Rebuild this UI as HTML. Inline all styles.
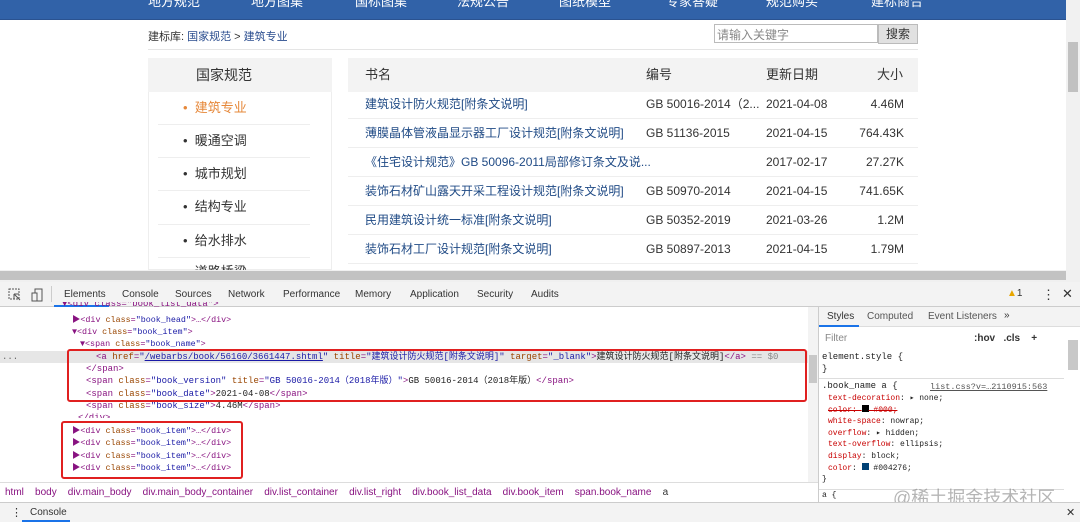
<!DOCTYPE html>
<html><head><meta charset="utf-8"><style>
*{margin:0;padding:0;box-sizing:border-box}
body{width:1080px;height:522px;overflow:hidden;background:#fff;font-family:"Liberation Sans","Noto Sans CJK SC",sans-serif;position:relative}
.abs{position:absolute}
.nav{left:0;top:0;width:1066px;height:20px;background:#3162a8;border-bottom:1px solid #2a5290;overflow:hidden}
.nav span{position:absolute;top:-9px;color:#fff;font-size:13px;white-space:nowrap}
.cr{font-size:11px;color:#333;left:148px;top:28px}
.cr a{color:#2a4d8f}
.t13{font-size:13px;color:#333;white-space:nowrap;line-height:16px}
.r{font-size:12px;line-height:16px}
.code{font-family:"Liberation Mono","Noto Sans CJK SC",monospace;font-size:9px;line-height:12px;height:12px;white-space:nowrap;color:#881280}
.sm{font-size:8.4px}
.at{color:#994500}.av{color:#1a1aa6}.tx{color:#222}
.ui{font-size:10px;color:#333;white-space:nowrap}
.st{font-family:"Liberation Mono","Noto Sans CJK SC",monospace;font-size:8px;white-space:nowrap}
.st i{font-style:normal;display:inline-block;width:6px}
</style></head><body>
<div class="abs nav"><span style="left:148px">地方规范</span><span style="left:251px">地方图集</span><span style="left:355px">国标图集</span><span style="left:457px">法规公告</span><span style="left:559px">图纸模型</span><span style="left:666px">专家答疑</span><span style="left:766px">规范购买</span><span style="left:871px">建标商合</span></div>
<div class="abs" style="left:1066px;top:0;width:14px;height:270px;background:#f1f1f1"><div style="margin:42px 2px 0;height:50px;background:#c1c1c1"></div></div>
<div class="abs cr">建标库: <a>国家规范</a> &gt; <a>建筑专业</a></div>
<div class="abs" style="left:714px;top:24px;width:164px;height:19px;border:1px solid #bbb;font-size:12px;color:#888;padding:1px 2px">请输入关键字</div>
<div class="abs" style="left:878px;top:24px;width:40px;height:20px;background:#e1e1e1;border:1px solid #bbb;font-size:12px;text-align:center;line-height:18px;color:#333">搜索</div>
<div class="abs" style="left:148px;top:49px;width:770px;height:1px;background:#e5e5e5"></div>
<div class="abs" style="left:148px;top:58px;width:184px;height:212px;background:#fff;border:1px solid #eee"></div>
<div class="abs" style="left:148px;top:58px;width:184px;height:34px;background:#f3f3f3"></div>
<div class="abs t13" style="left:196px;top:67px;font-size:14px">国家规范</div>
<div class="abs t13" style="left:183px;top:100px;color:#e6883a">• &nbsp;建筑专业</div>
<div class="abs t13" style="left:183px;top:133px">• &nbsp;暖通空调</div>
<div class="abs t13" style="left:183px;top:166px">• &nbsp;城市规划</div>
<div class="abs t13" style="left:183px;top:199px">• &nbsp;结构专业</div>
<div class="abs t13" style="left:183px;top:233px">• &nbsp;给水排水</div>
<div class="abs t13" style="left:183px;top:264px">• &nbsp;道路桥梁</div>
<div class="abs" style="left:158px;top:124px;width:152px;height:1px;background:#eee"></div>
<div class="abs" style="left:158px;top:157px;width:152px;height:1px;background:#eee"></div>
<div class="abs" style="left:158px;top:190px;width:152px;height:1px;background:#eee"></div>
<div class="abs" style="left:158px;top:224px;width:152px;height:1px;background:#eee"></div>
<div class="abs" style="left:158px;top:257px;width:152px;height:1px;background:#eee"></div>
<div class="abs" style="left:348px;top:58px;width:570px;height:34px;background:#f3f3f3"></div>
<div class="abs t13" style="left:365px;top:67px">书名</div>
<div class="abs t13" style="left:646px;top:67px">编号</div>
<div class="abs t13" style="left:766px;top:67px">更新日期</div>
<div class="abs t13" style="left:877px;top:67px">大小</div>
<div class="abs" style="left:348px;top:0;width:570px">
<div class="abs t13 r" style="left:17px;top:96px;color:#1f4a85">建筑设计防火规范[附条文说明]</div><div class="abs t13 r" style="left:298px;top:96px">GB 50016-2014（2...</div><div class="abs t13 r" style="left:418px;top:96px">2021-04-08</div><div class="abs t13 r" style="right:14px;top:96px">4.46M</div>
<div class="abs t13 r" style="left:17px;top:125px;color:#1f4a85">薄膜晶体管液晶显示器工厂设计规范[附条文说明]</div><div class="abs t13 r" style="left:298px;top:125px">GB 51136-2015</div><div class="abs t13 r" style="left:418px;top:125px">2021-04-15</div><div class="abs t13 r" style="right:14px;top:125px">764.43K</div>
<div class="abs t13 r" style="left:17px;top:154px;color:#1f4a85">《住宅设计规范》GB 50096-2011局部修订条文及说...</div><div class="abs t13 r" style="left:418px;top:154px">2017-02-17</div><div class="abs t13 r" style="right:14px;top:154px">27.27K</div>
<div class="abs t13 r" style="left:17px;top:183px;color:#1f4a85">装饰石材矿山露天开采工程设计规范[附条文说明]</div><div class="abs t13 r" style="left:298px;top:183px">GB 50970-2014</div><div class="abs t13 r" style="left:418px;top:183px">2021-04-15</div><div class="abs t13 r" style="right:14px;top:183px">741.65K</div>
<div class="abs t13 r" style="left:17px;top:212px;color:#1f4a85">民用建筑设计统一标准[附条文说明]</div><div class="abs t13 r" style="left:298px;top:212px">GB 50352-2019</div><div class="abs t13 r" style="left:418px;top:212px">2021-03-26</div><div class="abs t13 r" style="right:14px;top:212px">1.2M</div>
<div class="abs t13 r" style="left:17px;top:241px;color:#1f4a85">装饰石材工厂设计规范[附条文说明]</div><div class="abs t13 r" style="left:298px;top:241px">GB 50897-2013</div><div class="abs t13 r" style="left:418px;top:241px">2021-04-15</div><div class="abs t13 r" style="right:14px;top:241px">1.79M</div>
<div class="abs" style="left:0;top:118px;width:570px;height:1px;background:#eee"></div>
<div class="abs" style="left:0;top:147px;width:570px;height:1px;background:#eee"></div>
<div class="abs" style="left:0;top:176px;width:570px;height:1px;background:#eee"></div>
<div class="abs" style="left:0;top:205px;width:570px;height:1px;background:#eee"></div>
<div class="abs" style="left:0;top:234px;width:570px;height:1px;background:#eee"></div>
<div class="abs" style="left:0;top:263px;width:570px;height:1px;background:#eee"></div>
</div>
<div class="abs" style="left:0;top:270px;width:1080px;height:12px;background:#f0f0f0"><div style="margin:1px 0 0 0;width:1066px;height:9px;background:#c2c2c2"></div></div>
<!-- devtools -->
<div class="abs" style="left:0;top:282px;width:1080px;height:25px;background:#f3f3f3;border-bottom:1px solid #ccc"></div>
<svg class="abs" style="left:8px;top:288px" width="36" height="14"><rect x="1" y="1" width="10" height="10" fill="none" stroke="#555" stroke-dasharray="2 1"/><path d="M6 6l6 6M6 6v5M6 6h5" stroke="#555" fill="none"/><rect x="27" y="1" width="7" height="12" fill="none" stroke="#555"/><rect x="24" y="5" width="5" height="8" fill="#f3f3f3" stroke="#555"/></svg>
<div class="abs" style="left:51px;top:286px;width:1px;height:16px;background:#ccc"></div>
<div class="abs ui" style="left:64px;top:289px">Elements</div>
<div class="abs" style="left:54px;top:305px;width:55px;height:2px;background:#1a73e8"></div>
<div class="abs ui" style="left:122px;top:289px">Console</div>
<div class="abs ui" style="left:175px;top:289px">Sources</div>
<div class="abs ui" style="left:228px;top:289px">Network</div>
<div class="abs ui" style="left:283px;top:289px">Performance</div>
<div class="abs ui" style="left:355px;top:289px">Memory</div>
<div class="abs ui" style="left:410px;top:289px">Application</div>
<div class="abs ui" style="left:477px;top:289px">Security</div>
<div class="abs ui" style="left:531px;top:289px">Audits</div>
<div class="abs ui" style="left:1007px;top:288px;color:#333"><span style="color:#e8a600">▲</span>1</div>
<div class="abs ui" style="left:1042px;top:287px;font-size:13px">⋮</div>
<div class="abs ui" style="left:1062px;top:286px;font-size:13px">✕</div>
<div class="abs" style="left:0;top:351px;width:808px;height:12px;background:#e6e6e6"></div>
<div class="abs code" style="left:2px;top:351px;color:#666">...</div>
<div class="abs code" style="left:62px;top:302px;height:6px;overflow:hidden;line-height:4px">▼&lt;div class="book_list_data"&gt;</div>
<div class="abs code sm" style="left:72px;top:314px">▶&lt;div <span class="at">class</span>=<span class="av">"book_head"</span>&gt;…&lt;/div&gt;</div>
<div class="abs code sm" style="left:72px;top:326px">▼&lt;div <span class="at">class</span>=<span class="av">"book_item"</span>&gt;</div>
<div class="abs code sm" style="left:80px;top:338px">▼&lt;span <span class="at">class</span>=<span class="av">"book_name"</span>&gt;</div>
<div class="abs code" style="left:96px;top:351px">&lt;a <span class="at">href</span>=<span class="av">"<u>/webarbs/book/56160/3661447.shtml</u>"</span> <span class="at">title</span>=<span class="av">"建筑设计防火规范[附条文说明]"</span> <span class="at">target</span>=<span class="av">"_blank"</span>&gt;<span class="tx">建筑设计防火规范[附条文说明]</span>&lt;/a&gt; <span style="color:#888">== $0</span></div>
<div class="abs code" style="left:86px;top:363px">&lt;/span&gt;</div>
<div class="abs code" style="left:86px;top:375px">&lt;span <span class="at">class</span>=<span class="av">"book_version"</span> <span class="at">title</span>=<span class="av">"GB 50016-2014（2018年版）"</span>&gt;<span class="tx">GB 50016-2014（2018年版）</span>&lt;/span&gt;</div>
<div class="abs code" style="left:86px;top:388px">&lt;span <span class="at">class</span>=<span class="av">"book_date"</span>&gt;<span class="tx">2021-04-08</span>&lt;/span&gt;</div>
<div class="abs code" style="left:86px;top:400px">&lt;span <span class="at">class</span>=<span class="av">"book_size"</span>&gt;<span class="tx">4.46M</span>&lt;/span&gt;</div>
<div class="abs code" style="left:78px;top:412px;height:6px;overflow:hidden">&lt;/div&gt;</div>
<div class="abs code sm" style="left:72px;top:425px">▶&lt;div <span class="at">class</span>=<span class="av">"book_item"</span>&gt;…&lt;/div&gt;</div>
<div class="abs code sm" style="left:72px;top:437px">▶&lt;div <span class="at">class</span>=<span class="av">"book_item"</span>&gt;…&lt;/div&gt;</div>
<div class="abs code sm" style="left:72px;top:450px">▶&lt;div <span class="at">class</span>=<span class="av">"book_item"</span>&gt;…&lt;/div&gt;</div>
<div class="abs code sm" style="left:72px;top:462px">▶&lt;div <span class="at">class</span>=<span class="av">"book_item"</span>&gt;…&lt;/div&gt;</div>
<div class="abs" style="left:67px;top:349px;width:740px;height:53px;border:2px solid #e02020;border-radius:3px"></div>
<div class="abs" style="left:61px;top:421px;width:182px;height:58px;border:2px solid #e02020;border-radius:3px"></div>
<div class="abs" style="left:808px;top:307px;width:10px;height:175px;background:#f3f3f3"><div style="margin:48px 1px 0;height:28px;background:#c8c8c8"></div></div>
<div class="abs" style="left:0;top:482px;width:818px;height:20px;background:#fff;border-top:1px solid #ddd"></div>
<div class="abs ui" style="left:5px;top:487px;color:#881280">html&nbsp;&nbsp;&nbsp; body&nbsp;&nbsp;&nbsp; div.main_body&nbsp;&nbsp;&nbsp; div.main_body_container&nbsp;&nbsp;&nbsp; div.list_container&nbsp;&nbsp;&nbsp; div.list_right&nbsp;&nbsp;&nbsp; div.book_list_data&nbsp;&nbsp;&nbsp; div.book_item&nbsp;&nbsp;&nbsp; span.book_name&nbsp;&nbsp;&nbsp; <span style="color:#333">a</span></div>
<!-- styles -->
<div class="abs" style="left:818px;top:307px;width:262px;height:195px;background:#fff;border-left:1px solid #ccc"></div>
<div class="abs" style="left:819px;top:307px;width:261px;height:20px;background:#f3f3f3;border-bottom:1px solid #ddd"></div>
<div class="abs ui" style="left:827px;top:311px">Styles</div>
<div class="abs" style="left:819px;top:325px;width:40px;height:2px;background:#1a73e8"></div>
<div class="abs ui" style="left:867px;top:311px;color:#555">Computed</div>
<div class="abs ui" style="left:928px;top:311px;color:#555">Event Listeners</div>
<div class="abs ui" style="left:1004px;top:310px">»</div>
<div class="abs ui" style="left:825px;top:333px;color:#888">Filter</div>
<div class="abs ui" style="left:974px;top:333px;font-weight:bold">:hov&nbsp;&nbsp; .cls&nbsp;&nbsp;&nbsp; +</div>
<div class="abs st" style="left:822px;top:351px;color:#222;line-height:12px;font-size:9px">element.style {<br>}</div>
<div class="abs" style="left:819px;top:378px;width:245px;height:1px;background:#ddd"></div>
<div class="abs st" style="left:822px;top:381px;color:#222;line-height:11.6px;font-size:9px">.book_name a {</div>
<div class="abs st" style="left:822px;top:393px;color:#222;line-height:11.6px">
<i></i><span style="color:#c80000">text-decoration</span>: ▸ none;<br>
<i></i><s style="color:#c80000">color: <span style="display:inline-block;width:7px;height:7px;background:#000"></span> #000;</s><br>
<i></i><span style="color:#c80000">white-space</span>: nowrap;<br>
<i></i><span style="color:#c80000">overflow</span>: ▸ hidden;<br>
<i></i><span style="color:#c80000">text-overflow</span>: ellipsis;<br>
<i></i><span style="color:#c80000">display</span>: block;<br>
<i></i><span style="color:#c80000">color</span>: <span style="display:inline-block;width:7px;height:7px;background:#004276"></span> #004276;<br>}</div>
<div class="abs st" style="left:930px;top:382px;color:#555;text-decoration:underline;font-size:8.5px">list.css?v=…2110915:563</div>
<div class="abs" style="left:819px;top:489px;width:245px;height:1px;background:#ddd"></div>
<div class="abs st" style="left:822px;top:491px;color:#222">a {</div>
<div class="abs" style="left:1068px;top:340px;width:10px;height:30px;background:#c8c8c8"></div>
<div class="abs" style="left:893px;top:484px;font-size:18px;color:rgba(120,120,120,.55);white-space:nowrap">@稀土掘金技术社区</div>
<div class="abs" style="left:0;top:502px;width:1080px;height:20px;background:#f3f3f3;border-top:1px solid #ccc"></div>
<div class="abs ui" style="left:11px;top:506px;font-size:11px">⋮</div>
<div class="abs ui" style="left:30px;top:507px">Console</div>
<div class="abs" style="left:22px;top:520px;width:48px;height:2px;background:#1a73e8"></div>
<div class="abs ui" style="left:1066px;top:506px;font-size:11px">✕</div>
</body></html>
